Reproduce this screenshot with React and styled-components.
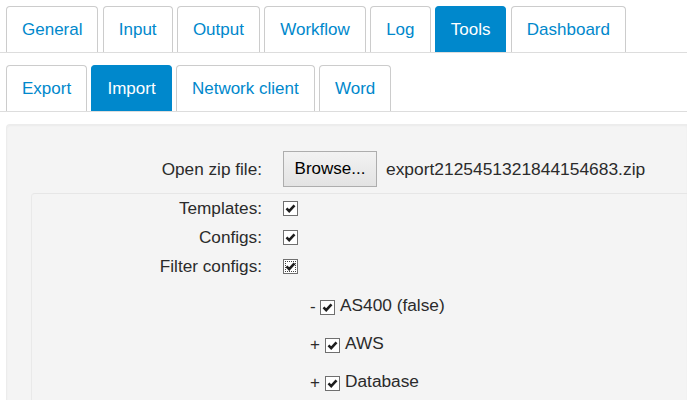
import React from "react";
import styled, { createGlobalStyle } from "styled-components";

const Global = createGlobalStyle`
  html, body { margin: 0; padding: 0; background: #fff; }
  body { font-family: "Liberation Sans", Arial, sans-serif; color: #2b2b2b; overflow: hidden; }
`;

const Page = styled.div`
  padding: 6px 0 0 6px;
  width: 687px;
  height: 400px;
  box-sizing: border-box;
  overflow: hidden;
`;

const TabBar = styled.ul`
  display: flex;
  list-style: none;
  margin: 0 0 ${(p) => p.$mb}px -6px;
  padding: 0 0 0 6px;
  border-bottom: 1px solid #ddd;
  height: 46px;
`;

const Tab = styled.li`
  box-sizing: border-box;
  height: 46px;
  padding: 0 15px;
  margin-right: 4.3px;
  display: flex;
  align-items: center;
  font-size: 17px;
  border: 1px solid ${(p) => (p.$active ? "#0088cc" : "#ccc")};
  border-bottom: none;
  border-radius: 4px 4px 0 0;
  background: ${(p) => (p.$active ? "#0088cc" : "#fff")};
  color: ${(p) => (p.$active ? "#fff" : "#0088cc")};
  white-space: nowrap;
`;

const Panel = styled.div`
  background: #f4f4f4;
  border-top: 1px solid #ececec;
  border-left: 1px solid #ececec;
  border-radius: 4px 0 0 0;
  box-shadow: inset 0 1px 2px rgba(0, 0, 0, 0.04);
  padding: 0 0 0 24px;
  height: 300px;
`;

const FileRow = styled.div`
  display: flex;
  align-items: center;
  padding: 26px 0 6px;
`;

const Label = styled.div`
  text-align: right;
  font-size: 17.2px;
  color: #2b2b2b;
  white-space: nowrap;
`;

const FileLabel = styled(Label)`
  width: 231px;
  margin-right: 21px;
`;

const Browse = styled.div`
  box-sizing: border-box;
  width: 94px;
  height: 36px;
  border: 1px solid #adadad;
  background: linear-gradient(#f2f2f2, #e3e3e3);
  display: flex;
  align-items: center;
  justify-content: center;
  font-size: 17px;
  color: #000;
  flex: none;
`;

const FileName = styled.span`
  font-size: 17.4px;
  color: #2b2b2b;
  margin-left: 9px;
  white-space: nowrap;
`;

const Inner = styled.div`
  border-top: 1px solid #e6e6e6;
  border-left: 1px solid #e9e9e9;
  border-radius: 4px 0 0 0;
  height: 300px;
`;

const Grid = styled.div`
  display: grid;
  grid-template-columns: 230px auto;
  column-gap: 21px;
  align-items: center;
  justify-content: start;
`;

const Cell = styled.div`
  height: 29px;
  display: flex;
  align-items: center;
`;

const LabelCell = styled(Cell)`
  justify-content: flex-end;
`;

const Box = styled.span`
  position: relative;
  box-sizing: border-box;
  width: 15px;
  height: 15px;
  border: 1px solid #6f6f6f;
  background: #fff;
  display: inline-flex;
  align-items: center;
  justify-content: center;
  flex: none;
  &::after {
    content: "";
    display: ${(p) => (p.$focus ? "block" : "none")};
    position: absolute;
    inset: 1px;
    border: 1px dotted #444;
  }
`;

const Check = ({ focus }) => (
  <Box $focus={focus}>
    <svg width="11" height="11" viewBox="0 0 11 11">
      <path d="M1.5 5.4 L4.2 8.2 L9.5 2.4" fill="none" stroke="#1e1e1e" strokeWidth="2.6" />
    </svg>
  </Box>
);

const Tree = styled.div`
  padding: 7px 0 0 278px;
  display: flex;
  flex-direction: column;
`;

const TreeItem = styled.div`
  height: 38px;
  display: flex;
  align-items: center;
  font-size: 17.3px;
  color: #2b2b2b;
  white-space: nowrap;
`;

const Toggle = styled.span`
  font-size: 17px;
  margin-right: 5px;
  width: ${(p) => p.$w}px;
  display: inline-block;
`;

const TreeText = styled.span`
  margin-left: 5px;
  position: relative;
  top: -2px;
`;

export default function App() {
  const tabs1 = ["General", "Input", "Output", "Workflow", "Log", "Tools", "Dashboard"];
  const tabs2 = ["Export", "Import", "Network client", "Word"];
  const rows = [
    { label: "Templates:" },
    { label: "Configs:" },
    { label: "Filter configs:", focus: true },
  ];
  return (
    <Page>
      <Global />
      <TabBar $mb={12}>
        {tabs1.map((t) => (
          <Tab key={t} $active={t === "Tools"}>{t}</Tab>
        ))}
      </TabBar>
      <TabBar $mb={12}>
        {tabs2.map((t) => (
          <Tab key={t} $active={t === "Import"}>{t}</Tab>
        ))}
      </TabBar>
      <Panel>
        <FileRow>
          <FileLabel>Open zip file:</FileLabel>
          <Browse>Browse...</Browse>
          <FileName>export2125451321844154683.zip</FileName>
        </FileRow>
        <Inner>
          <Grid>
            {rows.map((r) => (
              <React.Fragment key={r.label}>
                <LabelCell><Label>{r.label}</Label></LabelCell>
                <Cell><Check focus={r.focus} /></Cell>
              </React.Fragment>
            ))}
          </Grid>
          <Tree>
            <TreeItem><Toggle $w={5}>-</Toggle><Check /><TreeText>AS400 (false)</TreeText></TreeItem>
            <TreeItem><Toggle $w={10}>+</Toggle><Check /><TreeText>AWS</TreeText></TreeItem>
            <TreeItem><Toggle $w={10}>+</Toggle><Check /><TreeText>Database</TreeText></TreeItem>
          </Tree>
        </Inner>
      </Panel>
    </Page>
  );
}
